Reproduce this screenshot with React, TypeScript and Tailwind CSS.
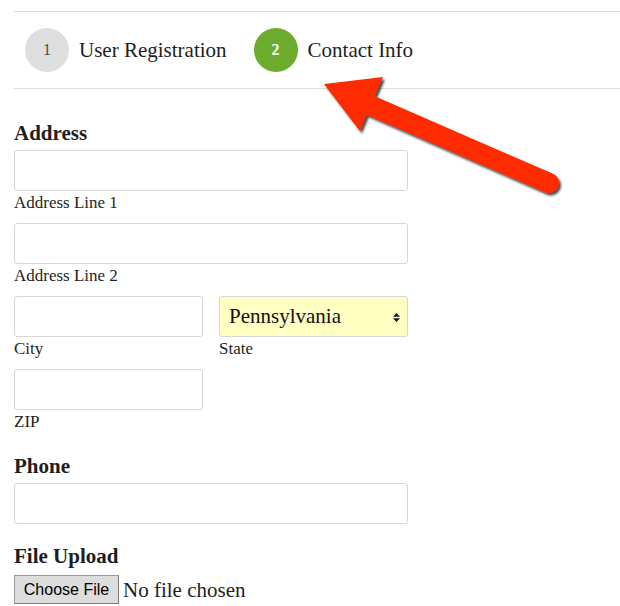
import React from "react";

const Field = ({ label, className }: { label: string; className: string }) => {
  return (
    <div className="mb-[10px]">
      <input
        type="text"
        className={`block h-[41px] rounded-[3px] border border-[#d6d6d6] bg-white ${className}`}
      />
      <p className="mt-[2px] text-[17px] leading-[20px]">{label}</p>
    </div>
  );
};

const Step = ({
  number,
  title,
  active,
}: {
  number: string;
  title: string;
  active?: boolean;
}) => {
  return (
    <div className="flex items-center gap-[10px]">
      <div
        className={`flex h-[44px] w-[44px] items-center justify-center rounded-full text-[16px] ${
          active ? "bg-[#6cab2b] font-bold text-white" : "bg-[#dedede] text-[#4a4a4a]"
        }`}
      >
        {number}
      </div>
      <span className="text-[21px] leading-[24px] text-[#1e1e1e]">{title}</span>
    </div>
  );
};

const Arrow = () => {
  return (
    <svg
      className="pointer-events-none absolute left-0 top-0"
      width="620"
      height="606"
      viewBox="0 0 620 606"
    >
      <defs>
        <filter id="arrowShadow" x="-20%" y="-20%" width="140%" height="140%">
          <feDropShadow dx="2" dy="2.5" stdDeviation="1.2" floodColor="#2b2b2b" floodOpacity="0.85" />
        </filter>
      </defs>
      <g filter="url(#arrowShadow)" fill="#fe2c02">
        <line
          x1="372"
          y1="106"
          x2="549"
          y2="183"
          stroke="#fe2c02"
          strokeWidth="20"
          strokeLinecap="round"
        />
        <polygon points="324,84 383,77 360,131" />
      </g>
    </svg>
  );
};

export default function App() {
  return (
    <div className="relative min-h-[606px] bg-white pl-[14px] pt-[11px] font-['Liberation_Serif',serif] text-[#1e1e1e]">
      <div className="flex items-center gap-[27px] border-y border-[#dddddd] py-4 pl-[11px]">
        <Step number="1" title="User Registration" />
        <Step number="2" title="Contact Info" active />
      </div>

      <form className="mt-[32px]">
        <h3 className="text-[21px] font-bold leading-[24px]">Address</h3>
        <div className="mt-[5px]">
          <Field label="Address Line 1" className="w-[394px]" />
          <Field label="Address Line 2" className="w-[394px]" />
          <div className="flex gap-[16px]">
            <Field label="City" className="w-[189px]" />
            <div className="mb-[10px]">
              <div className="relative h-[41px] w-[189px]">
                <select
                  defaultValue="PA"
                  className="block h-[41px] w-[189px] appearance-none rounded-[3px] border border-[#d6d6d6] bg-[#ffffc2] pl-[9px] text-[21px] text-[#111]"
                >
                  <option value="PA">Pennsylvania</option>
                </select>
                <svg
                  className="pointer-events-none absolute right-[8px] top-[17px]"
                  width="7"
                  height="9"
                  viewBox="0 0 7 9"
                >
                  <polygon points="3.5,0 7,3.8 0,3.8" fill="#111" />
                  <polygon points="0,5.2 7,5.2 3.5,9" fill="#111" />
                </svg>
              </div>
              <p className="mt-[2px] text-[17px] leading-[20px]">State</p>
            </div>
          </div>
          <Field label="ZIP" className="w-[189px]" />
        </div>

        <h3 className="mt-[22px] text-[21px] font-bold leading-[24px]">Phone</h3>
        <input
          type="text"
          className="mt-[5px] block h-[41px] w-[394px] rounded-[3px] border border-[#d6d6d6] bg-white"
        />

        <h3 className="mt-[20px] text-[21px] font-bold leading-[24px]">File Upload</h3>
        <div className="mt-[7px] flex items-center gap-[4px]">
          <button
            type="button"
            className="h-[29px] w-[105px] border border-[#9a9a9a] border-b-[#7a7a7a] border-r-[#7a7a7a] bg-[#dddddd] font-['Liberation_Sans',sans-serif] text-[16px] text-black"
          >
            Choose File
          </button>
          <span className="text-[21px] leading-[24px]">No file chosen</span>
        </div>
      </form>

      <Arrow />
    </div>
  );
}
